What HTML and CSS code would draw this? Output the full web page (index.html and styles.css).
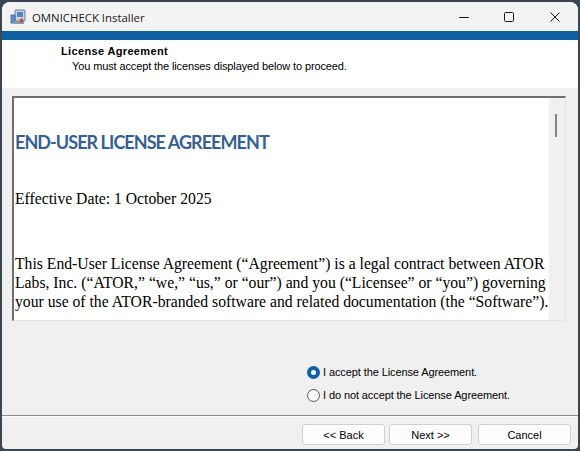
FILE: index.html
```html
<!DOCTYPE html>
<html>
<head>
<meta charset="utf-8">
<link rel="stylesheet" href="styles.css">
</head>
<body>
<div class="window">
  <div class="titlebar">
    <svg class="appicon" width="16" height="16" viewBox="0 0 16 16">
      <rect x="5" y="1" width="10" height="11" rx="1" fill="#c9d3de" stroke="#6b7c90" stroke-width="1"/>
      <rect x="7" y="3" width="6" height="5" fill="#4f86c6"/>
      <rect x="1" y="6" width="4" height="8" fill="#5b8fd0" stroke="#3a5f8f" stroke-width="0.8"/>
      <rect x="3" y="12" width="11" height="3" fill="#8a98a8"/>
      <circle cx="11.5" cy="11.5" r="2" fill="#c0504d"/>
    </svg>
    <span class="title">OMNICHECK Installer</span>
    <div class="controls">
      <span class="ctl"><svg width="10" height="10" viewBox="0 0 10 10"><path d="M0 5.5h10" stroke="#1a1a1a" stroke-width="1"/></svg></span>
      <span class="ctl"><svg width="10" height="10" viewBox="0 0 10 10"><rect x="0.5" y="0.5" width="9" height="9" rx="1" fill="none" stroke="#1a1a1a" stroke-width="1"/></svg></span>
      <span class="ctl"><svg width="10" height="10" viewBox="0 0 10 10"><path d="M0.5 0.5l9 9M9.5 0.5l-9 9" stroke="#1a1a1a" stroke-width="1"/></svg></span>
    </div>
  </div>
  <div class="accent"></div>
  <div class="header">
    <div class="h-title">License Agreement</div>
    <div class="h-sub">You must accept the licenses displayed below to proceed.</div>
  </div>
  <div class="content">
    <div class="licbox">
      <div class="lictext">
        <h1 class="lic-h">END-USER LICENSE AGREEMENT</h1>
        <p class="lic-p">Effective Date: 1 October 2025</p>
        <p class="lic-p">This End-User License Agreement (“Agreement”) is a legal contract between ATOR Labs, Inc. (“ATOR,” “we,” “us,” or “our”) and you (“Licensee” or “you”) governing your use of the ATOR-branded software and related documentation (the “Software”).</p>
      </div>
      <div class="scrollbar"><div class="thumb"></div></div>
    </div>
    <div class="choices">
      <label class="choice"><span class="radio on"></span>I accept the License Agreement.</label>
      <label class="choice"><span class="radio"></span>I do not accept the License Agreement.</label>
    </div>
    <div class="sep"></div>
    <div class="buttons">
      <button class="btn back">&lt;&lt; Back</button>
      <button class="btn next">Next &gt;&gt;</button>
      <button class="btn cancel">Cancel</button>
    </div>
  </div>
</div>
</body>
</html>
```
FILE: styles.css
```css
html, body {
  margin: 0;
  padding: 0;
}
body {
  width: 580px;
  height: 451px;
  background: #3b4652;
  overflow: hidden;
  font-family: "Liberation Sans", Arial, sans-serif;
}
.window {
  margin: 2px 0 0 2px;
  width: 576px;
  height: 447px;
  background: #f0f0f0;
  border-radius: 8px 8px 4px 4px;
  overflow: hidden;
  display: flex;
  flex-direction: column;
}
.titlebar {
  height: 29px;
  background: #f3f3f3;
  display: flex;
  align-items: center;
  flex-shrink: 0;
}
.appicon {
  margin-left: 8px;
  margin-top: 1px;
}
.title {
  margin-left: 6px;
  font-family: "Open Sans", "Noto Sans", sans-serif;
  font-size: 11.4px;
  color: #1a1a1a;
  margin-top: 1px;
}
.controls {
  margin-left: auto;
  display: flex;
  height: 100%;
}
.ctl {
  width: 45px;
  display: flex;
  align-items: center;
  justify-content: center;
  margin-top: 1px;
}
.ctl:last-child {
  width: 47px;
}
.accent {
  height: 9px;
  background: #0f5fa3;
  flex-shrink: 0;
}
.header {
  height: 48px;
  background: #ffffff;
  flex-shrink: 0;
  padding-left: 59px;
  box-sizing: border-box;
  padding-top: 4px;
}
.h-title {
  font-weight: bold;
  font-size: 11px;
  color: #000;
  line-height: 14px;
  letter-spacing: 0.35px;
}
.h-sub {
  font-size: 11px;
  color: #000;
  line-height: 14px;
  margin-left: 11px;
  margin-top: 1px;
  letter-spacing: -0.12px;
}
.content {
  flex: 1;
  display: flex;
  flex-direction: column;
}
.licbox {
  margin: 8px 0 0 10px;
  width: 554px;
  height: 225px;
  box-sizing: border-box;
  border-top: 2px solid #6f6f6f;
  border-left: 2px solid #6f6f6f;
  border-right: 1px solid #e3e3e3;
  border-bottom: 1px solid #e3e3e3;
  background: #fff;
  display: flex;
  overflow: hidden;
}
.lictext {
  flex: 1;
  padding-left: 1px;
  overflow: hidden;
}
.lic-h {
  margin: 32px 0 0 0;
  font-family: Lato, "Open Sans", sans-serif;
  font-weight: bold;
  font-size: 18px;
  line-height: 24px;
  letter-spacing: -0.95px;
  color: #365f91;
}
.lic-p {
  margin: 35px 0 0 0;
  font-family: "Liberation Serif", "Times New Roman", serif;
  font-size: 15.7px;
  line-height: 19px;
  color: #000;
}
.lic-p + .lic-p {
  margin-top: 46px;
}
.scrollbar {
  width: 16px;
  background: #f0f0f0;
  flex-shrink: 0;
}
.thumb {
  width: 2px;
  height: 23px;
  background: #858585;
  margin: 16px 0 0 6px;
}
.choices {
  margin: 44px 0 0 305px;
  display: flex;
  flex-direction: column;
  gap: 9px;
}
.choice {
  display: flex;
  align-items: center;
  font-size: 11px;
  color: #000;
  height: 14px;
  letter-spacing: -0.1px;
}
.radio {
  width: 11px;
  height: 11px;
  border: 1px solid #5a5a5a;
  border-radius: 50%;
  box-sizing: content-box;
  margin-right: 3px;
  background: #fafafa;
}
.radio.on {
  background: #fff;
  border: 4px solid #0f5fa3;
  width: 5px;
  height: 5px;
}
.sep {
  margin-top: 13px;
  height: 1px;
  border-top: 1px solid #8a8a8a;
  background: #fcfcfc;
}
.buttons {
  display: flex;
  margin: 7px 0 0 300px;
}
.btn {
  height: 21px;
  font-family: "Liberation Sans", Arial, sans-serif;
  font-size: 11px;
  color: #000;
  background: #fdfdfd;
  border: 1px solid #d0d0d0;
  border-radius: 3px;
  padding: 0;
}
.back { width: 83px; }
.next { width: 83px; margin-left: 4px; }
.cancel { width: 93px; margin-left: 6px; }
```
